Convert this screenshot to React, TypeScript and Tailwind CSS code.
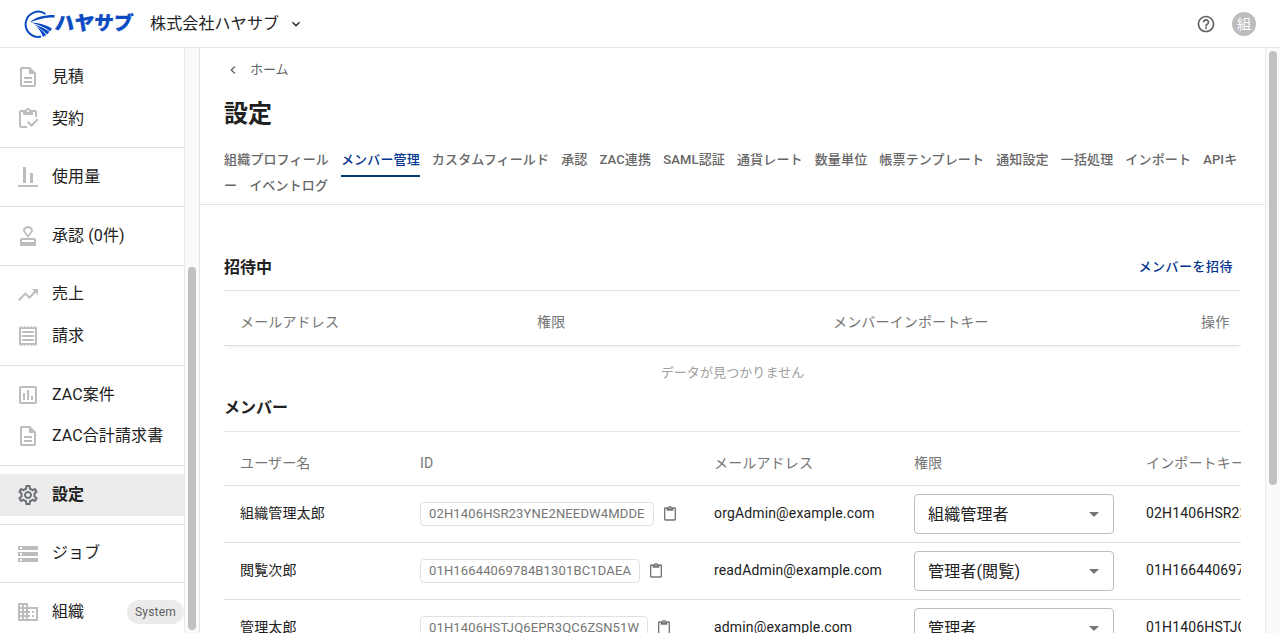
import React from 'react';
import {
  MdArrowDropDown,
  MdDomain,
  MdHelpOutline,
  MdKeyboardArrowDown,
  MdKeyboardArrowLeft,
  MdOutlineApproval,
  MdOutlineAssessment,
  MdOutlineContentPaste,
  MdOutlineDescription,
  MdOutlineInventory,
  MdOutlineReceipt,
  MdOutlineSettings,
  MdStorage,
  MdTrendingUp,
} from 'react-icons/md';

interface NavItem {
  label: string;
  icon: React.ElementType;
  active?: boolean;
  badge?: string;
}

interface Member {
  name: string;
  id: string;
  email: string;
  role: string;
}

const UsageIcon: React.FC<{ className?: string }> = ({ className }) => (
  <svg viewBox="0 0 24 24" fill="currentColor" className={className}>
    <path d="M2 20h20v2H2zM7 2h3v16H7zM14 8h3v10h-3z" />
  </svg>
);

const navGroups: NavItem[][] = [
  [
    { label: '見積', icon: MdOutlineDescription },
    { label: '契約', icon: MdOutlineInventory },
  ],
  [{ label: '使用量', icon: UsageIcon }],
  [{ label: '承認 (0件)', icon: MdOutlineApproval }],
  [
    { label: '売上', icon: MdTrendingUp },
    { label: '請求', icon: MdOutlineReceipt },
  ],
  [
    { label: 'ZAC案件', icon: MdOutlineAssessment },
    { label: 'ZAC合計請求書', icon: MdOutlineDescription },
  ],
  [{ label: '設定', icon: MdOutlineSettings, active: true }],
  [{ label: 'ジョブ', icon: MdStorage }],
  [{ label: '組織', icon: MdDomain, badge: 'System' }],
];

const tabs = [
  '組織プロフィール',
  'メンバー管理',
  'カスタムフィールド',
  '承認',
  'ZAC連携',
  'SAML認証',
  '通貨レート',
  '数量単位',
  '帳票テンプレート',
  '通知設定',
  '一括処理',
  'インポート',
  'APIキー',
  'イベントログ',
];

const members: Member[] = [
  { name: '組織管理太郎', id: '02H1406HSR23YNE2NEEDW4MDDE', email: 'orgAdmin@example.com', role: '組織管理者' },
  { name: '閲覧次郎', id: '01H16644069784B1301BC1DAEA', email: 'readAdmin@example.com', role: '管理者(閲覧)' },
  { name: '管理太郎', id: '01H1406HSTJQ6EPR3QC6ZSN51W', email: 'admin@example.com', role: '管理者' },
];

const Logo = () => (
  <div className="flex items-center text-[#0a4bc4]">
    <svg viewBox="0 0 32 30" className="h-[30px] w-8" fill="currentColor">
      <path
        d="M22.5 5A12.6 12.6 0 1 0 18 27.6"
        fill="none"
        stroke="currentColor"
        strokeWidth="2"
      />
      <path d="M6.5 13.6C12 8.2 20 6 31.5 6V8.4C21 8.4 14 10.4 6.5 13.6z" />
      <path d="M8 13.6C16 14 23 16 29 19.4L27.2 22.4C22 18.6 15 15.6 8 13.6z" />
      <path d="M11 15.4C17 17 22 19.6 26.4 22.8L24.2 25.6C20.6 21.8 16 18.2 11 15.4z" />
      <path d="M14 18C17.6 20 20.4 22.6 23.2 26L20 28C18.6 24.4 16.6 21 14 18z" />
    </svg>
    <span className="-skew-x-6 text-[19.5px] leading-[30px] font-black [-webkit-text-stroke:0.3px_#0a4bc4]">
      ハヤサブ
    </span>
  </div>
);

const Header = () => (
  <header className="flex h-12 shrink-0 items-center border-b border-[#e4e4e4] pr-6 pl-[23px]">
    <Logo />
    <span className="ml-[17px] text-base tracking-[0.15px]">株式会社ハヤサブ</span>
    <MdKeyboardArrowDown className="ml-[9px] size-4" />
    <MdHelpOutline className="ml-auto size-5 text-[#616161]" />
    <span className="ml-4 flex size-6 items-center justify-center rounded-full bg-[#bdbdbd] text-sm text-white">組</span>
  </header>
);

const Sidebar = () => (
  <aside className="flex w-[200px] shrink-0 border-r border-[#e4e4e4]">
    <nav className="w-[184px] shrink-0 overflow-hidden pt-[0.25px]">
      {navGroups.map((group, index) => (
        <div key={index} className="border-b border-[#e0e0e0] py-2">
          {group.map(({ label, icon: Icon, active, badge }) => (
            <a
              key={label}
              className={`flex h-[41.6px] items-center pl-4 ${active ? 'bg-[#ececed] font-bold' : ''}`}
            >
              <Icon className={`mt-[0.5px] size-6 shrink-0 ${active ? 'text-[#6b6f76]' : 'text-[#bdbdbd]'}`} />
              <span className="ml-3 text-base tracking-[0.1px] whitespace-nowrap">{label}</span>
              {badge && (
                <span className="ml-auto flex h-6 items-center rounded-full bg-[#ebebeb] px-2 text-xs tracking-[0.2px] text-[#616161]">
                  {badge}
                </span>
              )}
            </a>
          ))}
        </div>
      ))}
    </nav>
    <div className="flex w-[15px] shrink-0 flex-col border-l border-[#e8e8e8] bg-[#fafafa] pt-[219px] pb-[3px] pl-[3px]">
      <div className="w-2 flex-1 rounded-full bg-[#c1c1c1]" />
    </div>
  </aside>
);

const PageHeader = () => (
  <div className="h-[157px] border-b border-[#e4e4e4] px-6 pt-3">
    <div className="flex h-5 items-center text-[13px] text-[#616161]">
      <MdKeyboardArrowLeft className="ml-px size-4" />
      <span className="ml-[9px]">ホーム</span>
    </div>
    <h1 className="mt-[18px] text-2xl leading-8 font-bold">設定</h1>
    <div className="mt-[17px] text-[13px] leading-[26px] font-medium tracking-[0.15px] text-[#666] [line-break:anywhere]">
      {tabs.map((tab) => (
        <span
          key={tab}
          className={`mr-3 ${tab === 'メンバー管理' ? 'border-b-2 border-[#003c71] pb-2 text-[#00338d]' : ''}`}
        >
          {tab}
        </span>
      ))}
    </div>
  </div>
);

const InvitationSection = () => (
  <section>
    <div className="flex h-12 items-center justify-between border-b border-[#e4e4e4]">
      <h2 className="pt-0.5 text-base font-bold">招待中</h2>
      <button className="mr-2 text-[13px] font-medium tracking-[0.5px] text-[#00338d]">メンバーを招待</button>
    </div>
    <div className="grid h-[55px] grid-cols-[297px_296px_368px_1fr] items-center border-b border-[#e0e0e0] pt-2 pl-4 text-sm tracking-[0.15px] text-[#757575] shadow-[0_4px_3px_-3px_rgba(0,0,0,0.08)]">
      <span>メールアドレス</span>
      <span>権限</span>
      <span>メンバーインポートキー</span>
      <span>操作</span>
    </div>
    <p className="h-[37px] pt-[17px] text-center text-[13px] leading-5 tracking-[0.1px] text-[#a0a0a0]">
      データが見つかりません
    </p>
  </section>
);

const memberCols = 'grid w-[1200px] grid-cols-[180px_294px_200px_232px_1fr] items-center pl-4';

const MemberSection = () => (
  <section>
    <h2 className="flex h-[49px] items-center border-b border-[#e4e4e4] pt-px text-base font-bold">メンバー</h2>
    <div className="overflow-hidden">
      <div className={`${memberCols} h-[54px] border-b border-[#e0e0e0] pt-2 text-sm tracking-[0.15px] text-[#757575]`}>
        <span>ユーザー名</span>
        <span>ID</span>
        <span>メールアドレス</span>
        <span>権限</span>
        <span>インポートキー</span>
      </div>
      {members.map((member) => (
        <div key={member.id} className={`${memberCols} h-[57px] border-b border-[#e0e0e0] text-sm tracking-[0.15px]`}>
          <span className="pb-0.5">{member.name}</span>
          <span className="flex items-center">
            <code className="flex h-6 items-center rounded border border-[#e0e0e0] px-2 font-[inherit] text-[13px] text-[#757575]">
              {member.id}
            </code>
            <MdOutlineContentPaste className="ml-2 size-4 text-[#757575]" />
          </span>
          <span className="pb-0.5">{member.email}</span>
          <span className="flex h-10 w-[200px] items-center justify-between rounded border border-[#bdbdbd] pr-[7px] pl-[13px] text-base">
            <span className="pt-0.5">{member.role}</span>
            <MdArrowDropDown className="size-6 text-[#757575]" />
          </span>
          <span className="pb-0.5">{member.id}</span>
        </div>
      ))}
    </div>
  </section>
);

export default function App() {
  return (
    <div
      lang="ja"
      className="flex h-[633px] w-[1280px] flex-col overflow-hidden bg-white font-[Roboto,'Noto_Sans_CJK_JP',sans-serif] text-[#212121]"
    >
      <Header />
      <div className="flex min-h-0 flex-1">
        <Sidebar />
        <main className="min-w-0 flex-1 overflow-hidden">
          <PageHeader />
          <div className="px-6 pt-[38px]">
            <InvitationSection />
            <MemberSection />
          </div>
        </main>
        <div className="w-[15px] shrink-0 border-l border-[#e8e8e8] bg-[#fafafa] pt-[3px] pl-[3px]">
          <div className="h-[434px] w-2 rounded-full bg-[#c1c1c1]" />
        </div>
      </div>
    </div>
  );
}
